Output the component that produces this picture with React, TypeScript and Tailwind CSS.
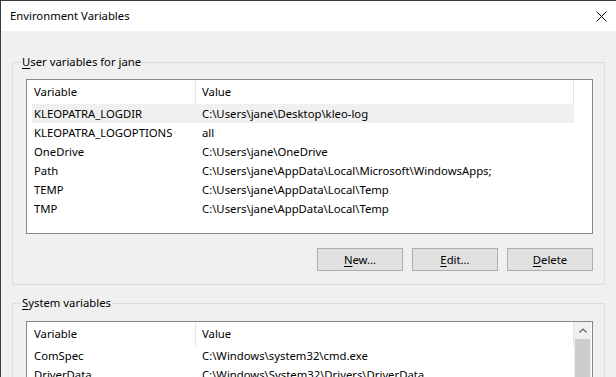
import React from 'react';

const userVars = [
  { name: 'KLEOPATRA_LOGDIR', value: 'C:\\Users\\jane\\Desktop\\kleo-log' },
  { name: 'KLEOPATRA_LOGOPTIONS', value: 'all' },
  { name: 'OneDrive', value: 'C:\\Users\\jane\\OneDrive' },
  { name: 'Path', value: 'C:\\Users\\jane\\AppData\\Local\\Microsoft\\WindowsApps;' },
  { name: 'TEMP', value: 'C:\\Users\\jane\\AppData\\Local\\Temp' },
  { name: 'TMP', value: 'C:\\Users\\jane\\AppData\\Local\\Temp' },
];

const systemVars = [
  { name: 'ComSpec', value: 'C:\\Windows\\system32\\cmd.exe' },
  { name: 'DriverData', value: 'C:\\Windows\\System32\\Drivers\\DriverData' },
];

function Header() {
  return (
    <div className="flex h-[24px] w-[542px] items-center bg-white">
      <div className="flex h-full w-[164px] items-center border-r border-[#e5e5e5] pl-[2px]">Variable</div>
      <div className="flex h-full w-[378px] items-center border-r border-[#e5e5e5] pl-[6px]">Value</div>
    </div>
  );
}

function Rows({ items, selected }: { items: { name: string; value: string }[]; selected?: number }) {
  return (
    <>
      {items.map((v, i) => (
        <div
          key={v.name}
          className={`flex h-[19px] w-[542px] items-center whitespace-nowrap ${i === selected ? 'bg-[#f0f0f0]' : ''}`}
        >
          <div className="w-[164px] pl-[2px]">{v.name}</div>
          <div className="w-[378px] pl-[6px]">{v.value}</div>
        </div>
      ))}
    </>
  );
}

function Btn({ k, rest }: { k: string; rest: string }) {
  return (
    <button className="flex h-[23px] w-[86px] items-center justify-center border border-[#adadad] bg-[#e1e1e1]">
      <span className="underline underline-offset-2">{k}</span>
      {rest}
    </button>
  );
}

export default function App() {
  return (
    <div className="h-[377px] w-[616px] overflow-hidden border-l border-t border-[#3a3a3a] bg-[#f0f0f0] font-['Segoe_UI','Noto_Sans',sans-serif] text-[11.3px] leading-[16px] text-black">
      <div className="flex h-[30px] items-center justify-between bg-white pl-[9px] pr-[8px]">
        <span>Environment Variables</span>
        <svg width="11" height="11" viewBox="0 0 11 11" className="mr-[1px]">
          <path d="M0.5 0.5 L10.5 10.5 M10.5 0.5 L0.5 10.5" stroke="#000" strokeWidth="1" />
        </svg>
      </div>

      <div className="px-[11px] pt-[23px]">
        <fieldset className="w-[593px] border border-[#dcdcdc]">
          <legend className="ml-[8px] px-[1px]">
            <span className="underline underline-offset-2">U</span>ser variables for jane
          </legend>
          <div className="pb-[13px] pl-[13px] pr-[11px] pt-[9px]">
            <div className="h-[155px] border border-[#828790] bg-white pl-[5px]">
              <Header />
              <Rows items={userVars} selected={0} />
            </div>
            <div className="mt-[14px] flex justify-end gap-[9px]">
              <Btn k="N" rest="ew..." />
              <Btn k="E" rest="dit..." />
              <Btn k="D" rest="elete" />
            </div>
          </div>
        </fieldset>

        <fieldset className="mt-[10px] w-[593px] border border-[#dcdcdc]">
          <legend className="ml-[8px] px-[1px]">
            <span className="underline underline-offset-2">S</span>ystem variables
          </legend>
          <div className="pb-[13px] pl-[13px] pr-[11px] pt-[10px]">
            <div className="flex h-[155px] border border-[#828790] bg-white pl-[5px]">
              <div>
                <Header />
                <Rows items={systemVars} />
              </div>
              <div className="flex w-[17px] flex-col bg-[#f0f0f0]">
                <div className="flex h-[17px] items-center justify-center">
                  <svg width="8" height="5" viewBox="0 0 8 5">
                    <path d="M0.5 4.5 L4 1 L7.5 4.5" stroke="#606060" strokeWidth="1.2" fill="none" />
                  </svg>
                </div>
                <div className="mx-[1px] h-[80px] bg-[#cdcdcd]" />
              </div>
            </div>
          </div>
        </fieldset>
      </div>
    </div>
  );
}
